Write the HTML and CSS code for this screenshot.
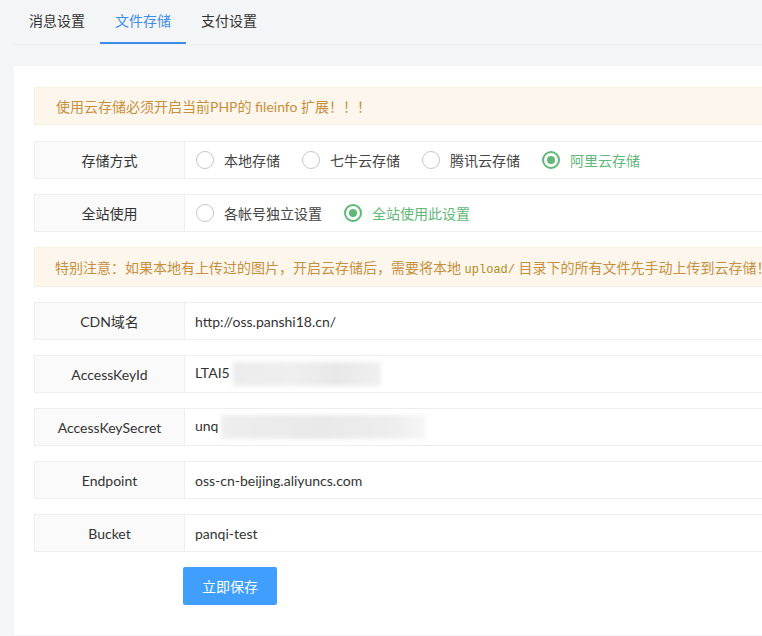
FILE: index.html
```html
<!DOCTYPE html>
<html lang="zh-CN">
<head>
  <meta charset="UTF-8">
  <title>文件存储</title>
  <meta name="viewport" content="width=device-width, initial-scale=1.0">
  <link rel="stylesheet" href="styles.css">
</head>
<body>

  <div class="tabs">
    <div class="tab">消息设置</div>
    <div class="tab active">文件存储</div>
    <div class="tab">支付设置</div>
  </div>

  <div class="panel">
    <div class="alert first">使用云存储必须开启当前PHP的 fileinfo 扩展！！！</div>

    <div class="row">
      <div class="label">存储方式</div>
      <div class="value">
        <span class="radio"><i></i>本地存储</span>
        <span class="radio"><i></i>七牛云存储</span>
        <span class="radio"><i></i>腾讯云存储</span>
        <span class="radio checked"><i></i>阿里云存储</span>
      </div>
    </div>

    <div class="row">
      <div class="label">全站使用</div>
      <div class="value">
        <span class="radio"><i></i>各帐号独立设置</span>
        <span class="radio checked"><i></i>全站使用此设置</span>
      </div>
    </div>

    <div class="alert tall">特别注意：如果本地有上传过的图片，开启云存储后，需要将本地 <code>upload/</code> 目录下的所有文件先手动上传到云存储！</div>

    <div class="row">
      <div class="label">CDN域名</div>
      <div class="value">http://oss.panshi18.cn/</div>
    </div>

    <div class="row">
      <div class="label">AccessKeyId</div>
      <div class="value"><span>LTAI5<span class="mask short"></span></span></div>
    </div>

    <div class="row">
      <div class="label">AccessKeySecret</div>
      <div class="value"><span>unq<span class="mask long"></span></span></div>
    </div>

    <div class="row">
      <div class="label">Endpoint</div>
      <div class="value">oss-cn-beijing.aliyuncs.com</div>
    </div>

    <div class="row">
      <div class="label">Bucket</div>
      <div class="value">panqi-test</div>
    </div>

    <div class="actions">
      <button class="btn">立即保存</button>
    </div>
  </div>

</body>
</html>
```

FILE: styles.css
```css
body {
  margin: 0;
  background: #f4f5f7;
  font-family: Lato, "Noto Sans CJK SC", sans-serif;
  font-size: 14px;
  color: #333;
  overflow: hidden;
}

.tabs {
  display: flex;
  margin-left: 14px;
  height: 44px;
  border-bottom: 1px solid #ebedf0;
}

.tab {
  padding: 0 15px;
  line-height: 42px;
  border-bottom: 2px solid transparent;
  color: #333;
}

.tab.active {
  color: #3d8ee8;
  border-bottom-color: #3d8ee8;
}

.panel {
  background: #fff;
  margin: 21px 0 0 14px;
  width: 800px;
  padding: 21px 20px 30px;
  display: flex;
  flex-direction: column;
  gap: 15px;
}

.alert {
  height: 38px;
  line-height: 38px;
  padding: 0 21px;
  background: #fdf6ec;
  border: 1px solid #faf0e0;
  box-sizing: border-box;
  color: #c6903f;
  white-space: nowrap;
}

.alert.first {
  margin-bottom: 1px;
}

.alert.tall {
  height: 40px;
  line-height: 40px;
  padding-left: 20px;
}

.alert code {
  font-family: "Liberation Mono", monospace;
  font-size: 12px;
  color: #b68a1c;
}

.row {
  display: flex;
  height: 38px;
  border: 1px solid #eeeeee;
  box-sizing: border-box;
}

.label {
  width: 149px;
  flex-shrink: 0;
  background: #fafafa;
  border-right: 1px solid #eeeeee;
  display: flex;
  align-items: center;
  justify-content: center;
}

.value {
  display: flex;
  align-items: center;
  padding-left: 10px;
  gap: 21px;
  white-space: nowrap;
}

.radio {
  display: flex;
  align-items: center;
  gap: 10px;
  color: #444;
}

.radio i {
  flex-shrink: 0;
  width: 18px;
  height: 18px;
  border: 1px solid #c6c6c6;
  border-radius: 50%;
  box-sizing: border-box;
  margin-left: 1px;
  position: relative;
}

.radio.checked {
  color: #5fb878;
}

.radio.checked i {
  border: 2px solid #5fb878;
}

.radio.checked i::after {
  content: "";
  position: absolute;
  left: 3px;
  top: 3px;
  width: 8px;
  height: 8px;
  border-radius: 50%;
  background: #5fb878;
}

.mask {
  display: inline-block;
  vertical-align: middle;
  height: 24px;
  filter: blur(2px);
  background: linear-gradient(90deg, #ececec, #efefef 40%, #e8e8e8 70%, #f0f0f0);
}

.mask.short {
  width: 148px;
  margin-left: 3px;
}

.mask.long {
  width: 205px;
  margin-left: 3px;
  background: linear-gradient(90deg, #eeeeee, #e9e9e9 50%, #eeeeee 85%, #f7f7f7);
}

.actions {
  padding-left: 149px;
}

.btn {
  height: 38px;
  padding: 0 19px;
  border: none;
  border-radius: 2px;
  background: #409eff;
  color: #fff;
  font-family: inherit;
  font-size: 14px;
}
```
